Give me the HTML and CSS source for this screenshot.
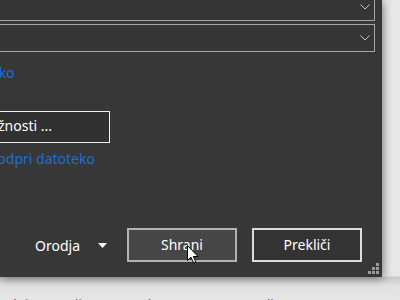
FILE: index.html
```html
<!DOCTYPE html>
<html lang="sl">
<head>
<meta charset="utf-8">
<title>Shrani kot</title>
<link rel="stylesheet" href="styles.css">
</head>
<body>
<div class="desk">
  <div class="bgwin">
    <div class="bgline first"></div>
    <div class="bgline second"></div>
    <div class="bgtext">Aktivno &nbsp;Ulj &nbsp;Sve &nbsp;Rale &nbsp;(Povezava) &nbsp;Folio &nbsp;T</div>
  </div>

  <div class="dialog">
    <div class="combo first">
      <svg class="chev" width="10" height="6" viewBox="0 0 10 6"><path d="M0.5 0.5 L5 5 L9.5 0.5" fill="none" stroke="#c8c8c8" stroke-width="1"/></svg>
    </div>
    <div class="combo second">
      <svg class="chev" width="10" height="6" viewBox="0 0 10 6"><path d="M0.5 0.5 L5 5 L9.5 0.5" fill="none" stroke="#c8c8c8" stroke-width="1"/></svg>
    </div>
    <a class="link ko">Prikaži mapo datoteko</a>
    <div class="optbtn">Možnosti ...</div>
    <a class="link open">Ob shranjevanju odpri datoteko</a>

    <div class="actions">
      <div class="tools">
        <span>Orodja</span>
        <svg class="tri" width="9" height="5" viewBox="0 0 9 5"><path d="M0 0 H9 L4.5 5 Z" fill="#ffffff"/></svg>
      </div>
      <div class="btn save">Shrani</div>
      <div class="btn cancel">Prekliči</div>
    </div>

    <svg class="grip" width="11" height="11" viewBox="0 0 11 11">
      <rect x="8" y="0" width="3" height="3" fill="#9c9c9c"/>
      <rect x="4" y="4" width="3" height="3" fill="#9c9c9c"/>
      <rect x="8" y="4" width="3" height="3" fill="#9c9c9c"/>
      <rect x="0" y="8" width="3" height="3" fill="#9c9c9c"/>
      <rect x="4" y="8" width="3" height="3" fill="#9c9c9c"/>
      <rect x="8" y="8" width="3" height="3" fill="#9c9c9c"/>
    </svg>
  </div>

  <svg class="cursor" width="13" height="19" viewBox="0 0 13 19">
    <path d="M0.5 0.5 L0.5 15.5 L4 12.2 L6.6 18 L8.8 17 L6.3 11.5 L11 11.5 Z" fill="#ffffff" stroke="#000000" stroke-width="1" stroke-linejoin="round"/>
  </svg>
</div>
</body>
</html>
```

FILE: styles.css
```css
* { box-sizing: border-box; }

html, body {
  margin: 0;
  padding: 0;
}

body {
  width: 400px;
  height: 300px;
  overflow: hidden;
  background: #e6e6e6;
  font-family: "Noto Sans", "Open Sans", sans-serif;
}

.desk {
  position: relative;
  width: 400px;
  height: 300px;
  overflow: hidden;
}

.bgwin {
  display: flex;
  flex-direction: column;
  height: 300px;
  background: linear-gradient(#e8e8e8 0, #e8e8e8 276px, #c9c9c9 277px, #e2e2e2 286px, #e6e6e6 300px);
}

.bgline {
  height: 1px;
  background: #c4c4c4;
}

.bgline.first { margin-top: 46px; }
.bgline.second { margin-top: 209px; }

.bgtext {
  margin-top: 41px;
  padding-left: 5px;
  font-size: 13px;
  line-height: 16px;
  color: #555555;
  white-space: nowrap;
  word-spacing: 4px;
}

.dialog {
  position: absolute;
  top: 0;
  left: 0;
  width: 382px;
  height: 277px;
  background: #373737;
  box-shadow: 1px 1px 9px rgba(0, 0, 0, 0.5);
  display: flex;
  flex-direction: column;
  color: #ffffff;
  font-size: 14px;
  line-height: 19px;
}

.combo {
  height: 28px;
  margin-left: -30px;
  margin-right: 7px;
  border: 1px solid #a6a6a6;
  background: #363636;
  display: flex;
  align-items: center;
  justify-content: flex-end;
  padding-right: 4px;
}

.combo.first { margin-top: -7px; }
.combo.second { margin-top: 3px; }

.chev { display: block; }

.link {
  color: #1d6fd1;
  white-space: nowrap;
  display: block;
}

.link.ko {
  margin-top: 11px;
  margin-left: -133px;
}

.optbtn {
  margin-top: 29px;
  margin-left: -40px;
  width: 150px;
  height: 32px;
  border: 1px solid #f0f0f0;
  background: #313131;
  padding: 4px 0 7px 16px;
  white-space: nowrap;
}

.link.open {
  margin-top: 6px;
  margin-left: -114px;
}

.actions {
  margin-top: auto;
  padding: 0 20px 15px 0;
  display: flex;
  justify-content: flex-end;
  align-items: center;
}

.tools {
  display: flex;
  align-items: center;
  margin-right: 20px;
}

.tri {
  display: block;
  margin-left: 18px;
}

.btn {
  width: 110px;
  height: 34px;
  border: 2px solid #cfcfcf;
  text-align: center;
  padding-top: 5px;
}

.btn.save {
  background: #464646;
  border-color: #b3b3b3;
}

.btn.cancel {
  margin-left: 15px;
  background: #333333;
  border-color: #dcdcdc;
}

.grip {
  position: absolute;
  right: 3px;
  bottom: 3px;
  display: block;
}

.cursor {
  position: absolute;
  left: 187px;
  top: 245px;
}
```
